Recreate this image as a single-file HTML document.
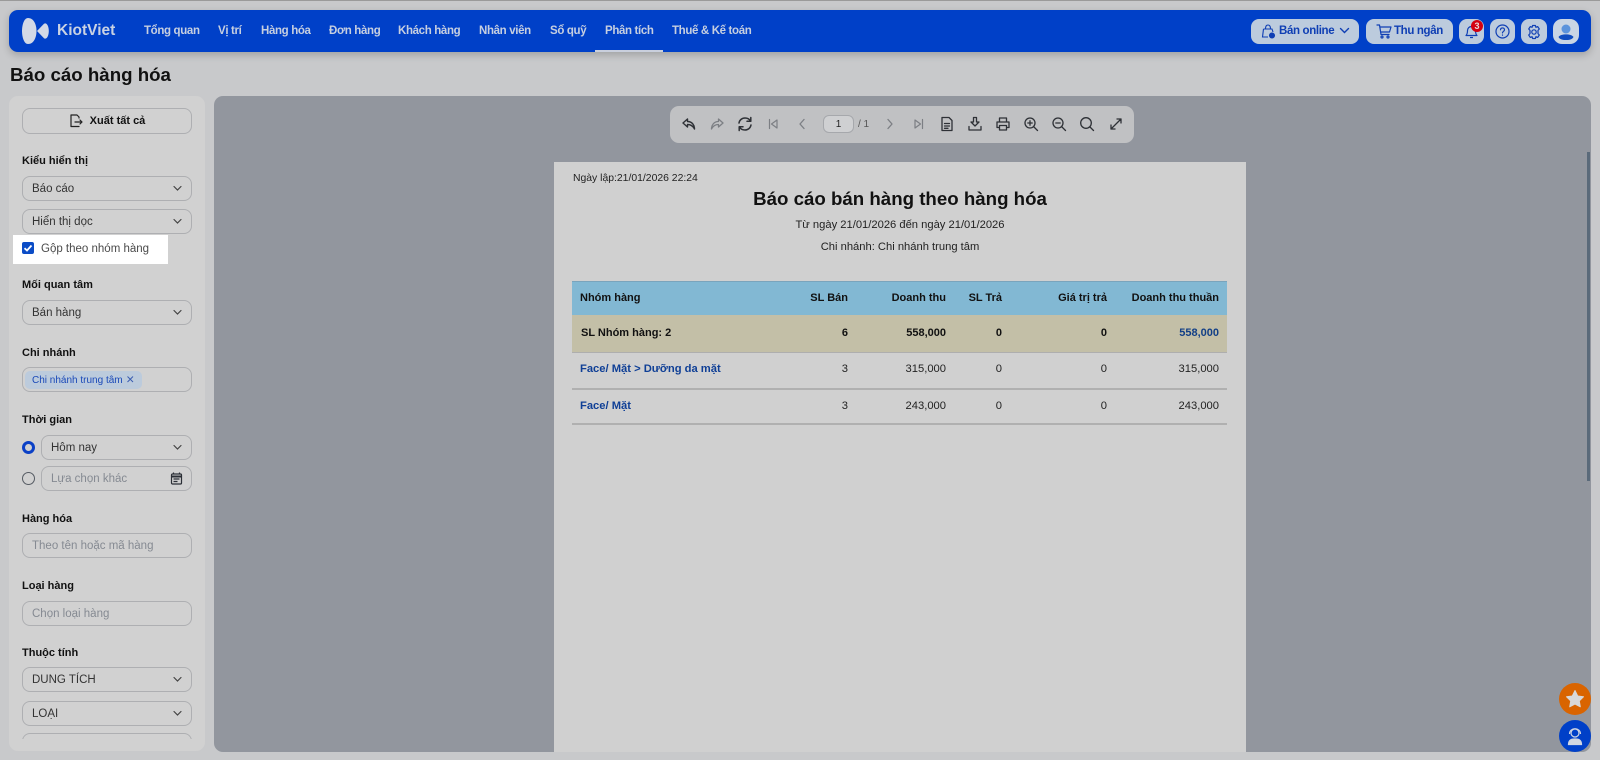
<!DOCTYPE html>
<html lang="vi"><head><meta charset="utf-8"><title>Báo cáo hàng hóa</title>
<style>
*{box-sizing:border-box}
html,body{margin:0;padding:0;width:1600px;height:760px;overflow:hidden;background:#c8c9cb;font-family:"Liberation Sans","DejaVu Sans",sans-serif}
.a{position:absolute;white-space:nowrap}
.t{position:absolute;white-space:nowrap;line-height:16px;transform:translateY(-8px)}
.nav{position:absolute;left:9px;top:10px;width:1582px;height:42px;background:#0040c8;border-radius:9px;box-shadow:0 3px 8px rgba(0,0,0,.2)}
.nl{position:absolute;top:23px;line-height:16px;font-size:11.5px;letter-spacing:-.35px;font-weight:700;color:#c6cfe0;white-space:nowrap}
.nb{position:absolute;top:19px;height:25px;background:#bccbdd;border-radius:8px}
.bl{font-size:11.5px;letter-spacing:-.35px;font-weight:700;color:#0f3fb4;position:absolute;top:23px;line-height:17px;white-space:nowrap}
.side{position:absolute;left:9px;top:96px;width:196px;height:655px;background:#d1d1d1;border-radius:9px}
.main{position:absolute;left:214px;top:96px;width:1377px;height:656px;background:#92969e;border-radius:9px;overflow:hidden}
.lb{position:absolute;left:22px;font-size:11px;font-weight:700;color:#111;line-height:16px;transform:translateY(-7px);white-space:nowrap}
.f{position:absolute;left:22px;width:170px;height:25px;border:1px solid #aeafb2;border-radius:8px;font-size:11.5px;line-height:25px;padding-left:9px;color:#333;white-space:nowrap}
.ph{color:#858a92}
.f svg{position:absolute;right:8px;top:7px}
.tb svg{position:absolute;top:116px;width:16px;height:16px;fill:none;stroke:#2e3136;stroke-width:1.3;stroke-linecap:round;stroke-linejoin:round}
.tb svg.d{stroke:#7c7f84}
.c{position:absolute;font-size:11.2px;line-height:16px;transform:translateY(-8px);white-space:nowrap;color:#222}
.b{font-size:11px;font-weight:700;color:#111}
.r{text-align:right}
.line{position:absolute;left:572px;width:655px}
</style></head><body>
<div class="a" style="left:0;top:0;width:1600px;height:1px;background:#9a9a9a"></div>

<div class="nav"></div>
<svg class="a" style="left:21px;top:17px" width="30" height="28" viewBox="0 0 30 28"><path d="M7 1C13 1 15.500 8 15.500 14S13 27 7 27C3 27 1 20 1 14S3 1 7 1Z" fill="#d3d9e6"/><path d="M16 14L23 6.800C25.500 5 27.800 9 27.800 14S25.500 23 23 21.200Z" fill="#d3d9e6"/></svg>
<div class="nl" style="left:57px;top:22px;font-size:15.5px;letter-spacing:0;line-height:18px;color:#c9d2e3">KiotViet</div>
<div class="nl" style="left:144px">Tổng quan</div>
<div class="nl" style="left:218px">Vị trí</div>
<div class="nl" style="left:261px">Hàng hóa</div>
<div class="nl" style="left:329px">Đơn hàng</div>
<div class="nl" style="left:398px">Khách hàng</div>
<div class="nl" style="left:479px">Nhân viên</div>
<div class="nl" style="left:550px">Sổ quỹ</div>
<div class="nl" style="left:605px">Phân tích</div>
<div class="nl" style="left:672px">Thuế &amp; Kế toán</div>
<div class="a" style="left:595px;top:50px;width:68px;height:2px;background:#c9cfdd"></div>

<div class="nb" style="left:1251px;width:108px"></div>
<svg class="a" style="left:1261px;top:24px" width="15" height="15" viewBox="0 0 15 15" fill="none" stroke="#0f3fb4" stroke-width="1.100"><path d="M2.500 5H11L12 8M4.500 5C4.500 2 5.500 1 7 1S9.500 2 9.500 5M2.500 5L1.500 13H7"/><circle cx="11" cy="11.500" r="2.500" fill="#0f3fb4"/></svg>
<div class="bl" style="left:1279px">Bán online</div>
<svg class="a" style="left:1339px;top:27px" width="11" height="8" viewBox="0 0 11 8" fill="none" stroke="#0f3fb4" stroke-width="1.400" stroke-linecap="round"><path d="M1.500 1.500L5.500 5.500L9.500 1.500"/></svg>
<div class="nb" style="left:1366px;width:87px"></div>
<svg class="a" style="left:1376px;top:24px" width="16" height="15" viewBox="0 0 16 15" fill="none" stroke="#0f3fb4" stroke-width="1.200" stroke-linecap="round" stroke-linejoin="round"><path d="M1 1H3.500L5 10.500H13M4 3H15L13.500 8H4.800"/><circle cx="6" cy="13" r="1"/><circle cx="12" cy="13" r="1"/></svg>
<div class="bl" style="left:1394px">Thu ngân</div>
<div class="nb" style="left:1459px;width:25px"></div>
<svg class="a" style="left:1465px;top:25px" width="13" height="14" viewBox="0 0 13 14" fill="none" stroke="#0f3fb4" stroke-width="1.200" stroke-linejoin="round"><path d="M1 10.500C2.500 9 2.500 7.500 2.500 5.500C2.500 3 4.500 1.500 6.500 1.500S10.500 3 10.500 5.500C10.500 7.500 10.500 9 12 10.500ZM5 12.500H8"/></svg>
<div class="a" style="left:1471px;top:20px;width:12px;height:12px;border-radius:50%;background:#d4000f;color:#e8d8d8;font-size:9px;font-weight:700;line-height:12px;text-align:center">3</div>
<div class="nb" style="left:1490px;width:25px"></div>
<svg class="a" style="left:1495px;top:24px" width="15" height="15" viewBox="0 0 15 15" fill="none" stroke="#0f3fb4" stroke-width="1.200" stroke-linecap="round"><circle cx="7.500" cy="7.500" r="6.500"/><path d="M5.500 5.800C5.600 3.300 9.500 3.300 9.500 5.800C9.500 7.300 7.500 7.300 7.500 8.900M7.500 11V11.200"/></svg>
<div class="nb" style="left:1521px;width:26px"></div>
<svg class="a" style="left:1526px;top:24px" width="16" height="16" viewBox="0 0 16 16" fill="none" stroke="#0f3fb4" stroke-width="1.200" stroke-linejoin="round"><path d="M6.600 1.500H9.400L9.900 3.300L11.700 2.600L13.300 5L12 6.400V9.600L13.300 11L11.700 13.400L9.900 12.700L9.400 14.500H6.600L6.100 12.700L4.300 13.400L2.700 11L4 9.600V6.400L2.700 5L4.300 2.600L6.100 3.300Z"/><circle cx="8" cy="8" r="2.200"/></svg>
<div class="a" style="left:1553px;top:19px;width:26px;height:25px;background:#c9d5e4;border-radius:9px"></div>
<svg class="a" style="left:1557px;top:23px" width="18" height="18" viewBox="0 0 18 18"><circle cx="9" cy="6" r="4.500" fill="#5b93dc"/><path d="M1.500 14C3.500 10.500 14.500 10.500 16.500 14C15 17 11 17 9 17S3 17 1.500 14Z" fill="#0f4cc0"/></svg>

<div class="a" style="left:10px;top:63px;font-size:18.700px;font-weight:700;line-height:24px;color:#111">Báo cáo hàng hóa</div>

<div class="side"></div>
<div class="f" style="top:108px;height:26px;padding:0;text-align:center;font-size:11px;font-weight:700;color:#111;line-height:24px;background:#d1d1d1"><span style="padding-left:21px">Xuất tất cả</span></div>
<svg class="a" style="left:69px;top:114px" width="14" height="14" viewBox="0 0 14 14" fill="none" stroke="#222" stroke-width="1.200" stroke-linejoin="round" stroke-linecap="round"><path d="M10 4V3L8 1H2V12.500H10M6 8H13M11 6L13 8L11 10"/></svg>

<div class="lb" style="top:160px">Kiểu hiển thị</div>
<div class="f" style="top:176px">Báo cáo<svg width="11" height="9" viewBox="0 0 11 9" fill="none" stroke="#444" stroke-width="1.200" stroke-linecap="round"><path d="M2 2.500L5.500 6L9 2.500"/></svg></div>
<div class="f" style="top:209px">Hiển thị dọc<svg width="11" height="9" viewBox="0 0 11 9" fill="none" stroke="#444" stroke-width="1.200" stroke-linecap="round"><path d="M2 2.500L5.500 6L9 2.500"/></svg></div>
<div class="a" style="left:13px;top:235px;width:155px;height:29px;background:#fff"></div>
<div class="a" style="left:22px;top:242px;width:12px;height:12px;background:#0b4cc6;border-radius:2px"></div>
<svg class="a" style="left:22px;top:242px" width="12" height="12" viewBox="0 0 12 12" fill="none" stroke="#fff" stroke-width="1.800"><path d="M2.500 6.200L5 8.500L9.500 3.500"/></svg>
<div class="t" style="left:41px;top:249px;font-size:11.5px;color:#4a4a4a">Gộp theo nhóm hàng</div>

<div class="lb" style="top:284px">Mối quan tâm</div>
<div class="f" style="top:300px">Bán hàng<svg width="11" height="9" viewBox="0 0 11 9" fill="none" stroke="#444" stroke-width="1.200" stroke-linecap="round"><path d="M2 2.500L5.500 6L9 2.500"/></svg></div>

<div class="lb" style="top:352px">Chi nhánh</div>
<div class="f" style="top:367px"></div>
<div class="a" style="left:25px;top:371px;width:117px;height:18px;background:#bccbdc;border-radius:5px"></div>
<div class="t" style="left:32px;top:381px;font-size:10px;color:#1a49b8">Chi nhánh trung tâm</div>
<svg class="a" style="left:126px;top:375px" width="9" height="9" viewBox="0 0 9 9" fill="none" stroke="#3a5db0" stroke-width="1"><path d="M1.500 1.500L7 7M7 1.500L1.500 7"/></svg>

<div class="lb" style="top:419px">Thời gian</div>
<div class="a" style="left:21.500px;top:440.500px;width:13px;height:13px;border-radius:50%;border:3.500px solid #0b40c6;background:#d1d1d1"></div>
<div class="f" style="left:41px;width:151px;top:435px">Hôm nay<svg width="11" height="9" viewBox="0 0 11 9" fill="none" stroke="#444" stroke-width="1.200" stroke-linecap="round"><path d="M2 2.500L5.500 6L9 2.500"/></svg></div>
<div class="a" style="left:21.500px;top:471.500px;width:13px;height:13px;border-radius:50%;border:1px solid #555b63"></div>
<div class="f ph" style="left:41px;width:151px;top:466px">Lựa chọn khác</div>
<svg class="a" style="left:170px;top:472px" width="13" height="13" viewBox="0 0 13 13" fill="none" stroke="#2b2f36" stroke-width="1.200"><rect x="1.500" y="2" width="10" height="10" rx="1"/><path d="M1.500 4.500H11.500" stroke-width="2"/><path d="M3.500 .5V2M9.500 .5V2M3.500 7H9.500M3.500 9.500H7.500"/></svg>

<div class="lb" style="top:518px">Hàng hóa</div>
<div class="f ph" style="top:533px">Theo tên hoặc mã hàng</div>
<div class="lb" style="top:585px">Loại hàng</div>
<div class="f ph" style="top:601px">Chọn loại hàng</div>
<div class="lb" style="top:652px">Thuộc tính</div>
<div class="f" style="top:667px">DUNG TÍCH<svg width="11" height="9" viewBox="0 0 11 9" fill="none" stroke="#444" stroke-width="1.200" stroke-linecap="round"><path d="M2 2.500L5.500 6L9 2.500"/></svg></div>
<div class="f" style="top:701px">LOẠI<svg width="11" height="9" viewBox="0 0 11 9" fill="none" stroke="#444" stroke-width="1.200" stroke-linecap="round"><path d="M2 2.500L5.500 6L9 2.500"/></svg></div>
<div class="a" style="left:22px;top:733px;width:170px;height:6px;overflow:hidden"><div style="width:170px;height:25px;border:1px solid #aeafb2;border-radius:8px"></div></div>

<div class="main"></div>
<div class="a" style="left:1587px;top:152px;width:3px;height:329px;background:#5a6a7a"></div>

<div class="a" style="left:670px;top:106px;width:464px;height:37px;background:#c0c1c3;border-radius:9px"></div>
<div class="tb">
<svg style="left:681px" viewBox="0 0 16 16"><path d="M6.500 3L2 7L6.500 11V8.500C10 8.500 12 10 13.500 13C13.500 9 11 5.500 6.500 5.500Z" stroke-width="1.400"/></svg>
<svg class="d" style="left:709px" viewBox="0 0 16 16"><path d="M9.500 3L14 7L9.500 11V8.500C6 8.500 4 10 2.500 13C2.500 9 5 5.500 9.500 5.500Z"/></svg>
<svg style="left:737px" viewBox="0 0 16 16"><path d="M2 7C2.500 4 5 2 8 2C10.500 2 12.500 3.200 13.500 5M13.800 1.500V5.300H10M14 9C13.500 12 11 14 8 14C5.500 14 3.500 12.800 2.500 11M2.200 14.500V10.700H6" stroke-width="1.500"/></svg>
<svg class="d" style="left:765px" viewBox="0 0 16 16"><path d="M4.500 3.500V12.500M12 4V12L6.500 8Z" stroke-width="1.200"/></svg>
<svg class="d" style="left:794px" viewBox="0 0 16 16"><path d="M10 3.500L6 8L10 12.500"/></svg>
<svg class="d" style="left:882px" viewBox="0 0 16 16"><path d="M6 3.500L10 8L6 12.500"/></svg>
<svg class="d" style="left:911px" viewBox="0 0 16 16"><path d="M11.500 3.500V12.500M4 4V12L9.500 8Z" stroke-width="1.200"/></svg>
<svg style="left:939px" viewBox="0 0 16 16"><path d="M3 1.500H10L13 4.500V14.500H3ZM5.500 7.500H10.500M5.500 10H10.500M5.500 12.300H9"/></svg>
<svg style="left:967px" viewBox="0 0 16 16"><path d="M6.500 1.500H9.500V6H12L8 10L4 6H6.500ZM2 10.500V14H14V10.500"/></svg>
<svg style="left:995px" viewBox="0 0 16 16"><path d="M4.500 6V2H11.500V6M4 11.500H2V6H14V11.500H12M4.500 9.500H11.500V14H4.500Z"/></svg>
<svg style="left:1023px" viewBox="0 0 16 16"><circle cx="7" cy="7" r="5"/><path d="M11 11L14.500 14.500M4.800 7H9.200M7 4.800V9.200"/></svg>
<svg style="left:1051px" viewBox="0 0 16 16"><circle cx="7" cy="7" r="5"/><path d="M11 11L14.500 14.500M4.800 7H9.200"/></svg>
<svg style="left:1079px" viewBox="0 0 16 16"><circle cx="7" cy="7" r="5.300"/><path d="M11 11L14.500 14.500"/></svg>
<svg style="left:1108px" viewBox="0 0 16 16"><path d="M3 13L13 3M9 3H13V7M3 9V13H7"/></svg>
</div>
<div class="a" style="left:823px;top:115px;width:31px;height:18px;background:#cfd0d2;border:1px solid #a6a8ac;border-radius:6px;font-size:10px;line-height:18px;text-align:center;color:#222">1</div>
<div class="t" style="left:858px;top:125px;font-size:10px;color:#555">/ 1</div>

<div class="a" style="left:554px;top:162px;width:692px;height:590px;background:#d0d0d0"></div>
<div class="c" style="left:573px;top:179px;font-size:10.400px">Ngày lập:21/01/2026 22:24</div>
<div class="c" style="left:554px;width:692px;top:199px;text-align:center;font-size:18.700px;font-weight:700;line-height:24px;transform:translateY(-12px);color:#111">Báo cáo bán hàng theo hàng hóa</div>
<div class="c" style="left:554px;width:692px;top:225px;text-align:center">Từ ngày 21/01/2026 đến ngày 21/01/2026</div>
<div class="c" style="left:554px;width:692px;top:247px;text-align:center">Chi nhánh: Chi nhánh trung tâm</div>

<div class="line" style="top:281px;height:34px;background:#82b8d3;border-top:1px solid #7aa4bc"></div>
<div class="line" style="top:315px;height:38px;background:#c3bfa7;border-bottom:1px solid #aeaeae"></div>
<div class="line" style="top:388px;height:2px;background:#b0b0b0"></div>
<div class="line" style="top:423px;height:2px;background:#b0b0b0"></div>

<div class="c b" style="left:580px;top:298px">Nhóm hàng</div>
<div class="c b r" style="right:752px;top:298px">SL Bán</div>
<div class="c b r" style="right:654px;top:298px">Doanh thu</div>
<div class="c b r" style="right:598px;top:298px">SL Trả</div>
<div class="c b r" style="right:493px;top:298px">Giá trị trả</div>
<div class="c b r" style="right:381px;top:298px">Doanh thu thuần</div>

<div class="c b" style="left:581px;top:333px">SL Nhóm hàng: 2</div>
<div class="c b r" style="right:752px;top:333px">6</div>
<div class="c b r" style="right:654px;top:333px">558,000</div>
<div class="c b r" style="right:598px;top:333px">0</div>
<div class="c b r" style="right:493px;top:333px">0</div>
<div class="c b r" style="right:381px;top:333px;color:#123f86">558,000</div>

<div class="c" style="left:580px;top:369px;font-weight:700;color:#0f3f96">Face/ Mặt &gt; Dưỡng da mặt</div>
<div class="c r" style="right:752px;top:369px">3</div>
<div class="c r" style="right:654px;top:369px">315,000</div>
<div class="c r" style="right:598px;top:369px">0</div>
<div class="c r" style="right:493px;top:369px">0</div>
<div class="c r" style="right:381px;top:369px">315,000</div>

<div class="c" style="left:580px;top:406px;font-weight:700;color:#0f3f96">Face/ Mặt</div>
<div class="c r" style="right:752px;top:406px">3</div>
<div class="c r" style="right:654px;top:406px">243,000</div>
<div class="c r" style="right:598px;top:406px">0</div>
<div class="c r" style="right:493px;top:406px">0</div>
<div class="c r" style="right:381px;top:406px">243,000</div>

<div class="a" style="left:1559px;top:683px;width:32px;height:32px;border-radius:50%;background:#d96400"></div>
<svg class="a" style="left:1565px;top:689px" width="20" height="20" viewBox="0 0 20 20"><path d="M10 1.500L12.700 7L18.500 7.800L14.300 11.900L15.300 17.800L10 15L4.700 17.800L5.700 11.900L1.500 7.800L7.300 7Z" fill="#d8d8d8" stroke="#d8d8d8" stroke-linejoin="round"/></svg>
<div class="a" style="left:1559px;top:720px;width:32px;height:32px;border-radius:50%;background:#0040c8"></div>
<svg class="a" style="left:1565px;top:726px" width="20" height="20" viewBox="0 0 20 20" fill="none" stroke="#d0d6e2" stroke-width="1.200"><circle cx="10" cy="7" r="4"/><path d="M4.500 8C4.500 1 15.500 1 15.500 8"/><path d="M3.500 18.500C3.500 14 6 13 10 13S16.500 14 16.500 18.500Z" fill="#d0d6e2"/></svg>
</body></html>
